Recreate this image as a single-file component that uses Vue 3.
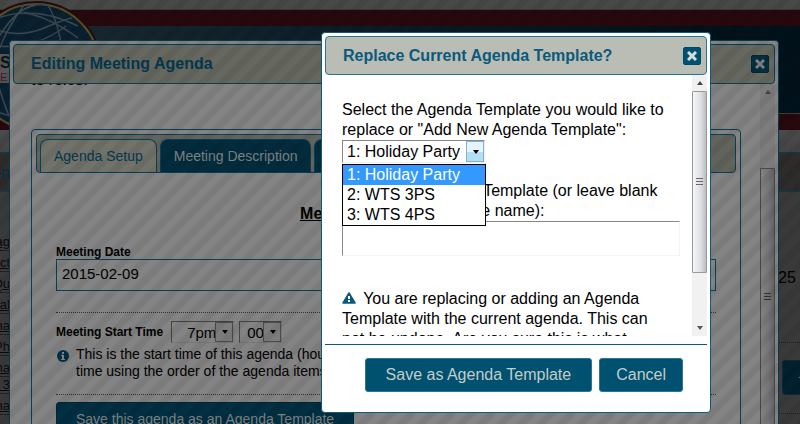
<template>
  <div class="desk">
    <header class="banner">
      <div class="band sky"></div>
      <div class="band red"></div>
      <div class="band navy"></div>
      <div class="band red"></div>
      <svg class="globe" width="104" height="134" viewBox="0 0 104 134" aria-hidden="true">
        <circle cx="36" cy="67" r="65" fill="#08161f" stroke="#260a10" stroke-width="2" />
        <circle cx="36" cy="67" r="63" fill="#09202f" stroke="#5a4e26" stroke-width="2" />
        <g fill="none" stroke="#3c474f" stroke-width="1.5">
          <path d="M0 35Q22 0 48 5Q62 30 62 60" />
          <path d="M-2 18Q35 5 78 26" />
          <path d="M-2 30Q20 38 44 28T72 18" />
          <path d="M24 13Q48 16 78 38" />
          <path d="M-2 46Q34 50 66 26" />
          <path d="M24 5Q6 30 0 48" />
          <path d="M-2 83Q4 106 12 122M-2 112L10 116" />
        </g>
        <rect x="-2" y="54" width="30" height="29" fill="#565656" />
      </svg>
      <div class="brand"><b>S</b><span>E</span></div>
    </header>

    <main class="page">
      <aside class="left">
        <div class="strip">en</div>
        <a v-for="(item, i) in roles" :key="i" href="#" :class="{ tight: item === 't 3' }" @click.prevent>{{ item }}</a>
      </aside>
      <aside class="right">
        <div class="strip"></div>
        <p class="date">25</p>
        <div class="action"><button type="button" aria-label="Add">✦</button></div>
      </aside>
    </main>

    <section class="window editor">
      <div class="titlebar">
        <h2>Editing Meeting Agenda</h2>
        <button type="button" class="close" aria-label="Close">
          <svg width="10" height="10" viewBox="0 0 10 10"><path d="M1 1l8 8M9 1l-8 8" /></svg>
        </button>
      </div>
      <div class="scroller">
        <div class="content">
          <p class="intro">to roles.</p>
          <div class="tabs">
            <nav>
              <a href="#setup" class="active">Agenda Setup</a>
              <a href="#description">Meeting Description</a>
              <a href="#roles">Roles</a>
            </nav>
            <form class="setup" @submit.prevent>
              <h3>Meeting Agenda Setup</h3>
              <label class="caption" for="date">Meeting Date</label>
              <input id="date" v-model="date" type="text">
              <hr>
              <div class="time">
                <label class="caption" for="hour">Meeting Start Time</label>
                <span class="pick hour"><select id="hour"><option>7pm</option></select></span>
                <span class="pick minute"><select aria-label="Minutes"><option>00</option></select></span>
              </div>
              <div class="hint">
                <svg width="12" height="12" viewBox="0 0 12 12" aria-hidden="true">
                  <circle cx="6" cy="6" r="6" fill="#042f42" />
                  <path d="M5 2h2v2H5zM4 5h3v4h1v1H4V9h1V6H4z" fill="#858585" />
                </svg>
                <p>This is the start time of this agenda (hours and<br>time using the order of the agenda items will</p>
              </div>
              <hr class="low">
              <button type="button" class="save">Save this agenda as an Agenda Template</button>
            </form>
          </div>
        </div>
        <div class="bar">
          <i class="up"></i>
          <div class="thumb"><i class="grip"></i></div>
        </div>
      </div>
    </section>

    <div class="overlay"></div>

    <section class="window dialog" role="dialog" aria-labelledby="dialog-title">
      <div class="titlebar">
        <h2 id="dialog-title">Replace Current Agenda Template?</h2>
        <button type="button" class="close" aria-label="Close">
          <svg width="10" height="10" viewBox="0 0 10 10"><path d="M1 1l8 8M9 1l-8 8" /></svg>
        </button>
      </div>
      <div class="scroller">
        <div class="content">
          <label for="template">Select the Agenda Template you would like to<br>replace or "Add New Agenda Template":</label>
          <div class="combo">
            <span class="pick">
              <select id="template" v-model="selected">
                <option v-for="t in templates" :key="t">{{ t }}</option>
              </select>
            </span>
            <ul class="options" role="listbox">
              <li
                v-for="t in templates"
                :key="t"
                role="option"
                :aria-selected="t === selected"
                :class="{ on: t === selected }"
                @click="selected = t"
              >{{ t }}</li>
            </ul>
          </div>
          <label for="name">Name your Agenda Template (or leave blank<br>to keep the Template name):</label>
          <input id="name" v-model="name" type="text">
          <p class="warning">
            <svg width="14" height="12" viewBox="0 0 14 12" aria-hidden="true">
              <path d="M7 1L13 11H1z" fill="#0b5a7c" stroke="#0b5a7c" stroke-width="1.5" stroke-linejoin="round" />
              <path d="M6 4h2v3H6zM6 8h2v2H6z" fill="#fff" />
            </svg>
            You are replacing or adding an Agenda<br>Template with the current agenda. This can<br>not be undone. Are you sure this is what
          </p>
        </div>
        <div class="bar">
          <i class="up"></i>
          <div class="thumb"><i class="grip"></i></div>
          <i class="down"></i>
        </div>
      </div>
      <footer>
        <button type="button" class="primary">Save as Agenda Template</button>
        <button type="button">Cancel</button>
      </footer>
    </section>
  </div>
</template>

<script setup>
import { ref } from 'vue';

const roles = ['ag', 'ct', 'Qu', 'Sal', 'na', 'Ph', 'na', 't 3', 'na'];
const templates = ['1: Holiday Party', '2: WTS 3PS', '3: WTS 4PS'];

const selected = ref(templates[0]);
const date = ref('2015-02-09');
const name = ref('');
</script>

<style>
body {
  background: #3a3a3a;
}
</style>

<style scoped>
* {
  box-sizing: border-box;
}

.desk {
  position: relative;
  min-height: 100vh;
  overflow: hidden;
  font: 16px/20px "Liberation Sans", Arial, sans-serif;
  color: #000;
}

h2, h3, p, ul {
  margin: 0;
  padding: 0;
}

button, input, select {
  font-family: inherit;
  margin: 0;
}

/* Page behind the windows */
.banner {
  position: relative;
}

.band.sky {
  height: 9px;
  background: #484848;
}

.band.red {
  height: 17px;
  background: #26080d;
  border-top: 1px solid #3c3c3c;
}

.band.navy {
  height: 87px;
  background: linear-gradient(90deg, #1c2a32, #0c1e28 40%, #02121b 85%);
}

.globe {
  position: absolute;
  left: 0;
  top: 0;
}

.brand {
  position: absolute;
  left: 0;
  top: 54px;
}

.brand b,
.brand span {
  display: block;
}

.brand b {
  font-size: 16px;
  line-height: 17px;
  color: #08141c;
}

.brand span {
  font-size: 11px;
  line-height: 12px;
  color: #4a1c24;
}

.page {
  display: flex;
  justify-content: space-between;
  padding-top: 22px;
  background: linear-gradient(#4a4a4a, #3a3a3a 60px);
}

.left {
  width: 10px;
}

.left a {
  display: flex;
  justify-content: flex-end;
  height: 21px;
  padding-top: 5px;
  font-size: 13px;
  line-height: 14px;
  color: #0a0a0a;
  white-space: nowrap;
  border-bottom: 1px dashed #1c1c1c;
}

.left a.tight {
  height: 17px;
  padding-top: 1px;
}

.left .strip {
  display: flex;
  justify-content: flex-end;
  margin-bottom: 38px;
}

.strip {
  height: 40px;
  line-height: 40px;
  color: #062c3f;
  background: #2d2c2b;
  border: solid #0c3a4f;
  border-width: 1px 0;
}

.right {
  width: 22px;
}

.right .date {
  height: 151px;
  padding-top: 76px;
  border-bottom: 1px dotted #1d1d1d;
}

.right .action {
  padding: 17px 0 18px 4px;
  border-bottom: 1px dotted #1d1d1d;
}

.right button {
  display: block;
  width: 40px;
  height: 35px;
  color: #777;
  background: #02202e;
  border: 1px solid #0a2c3b;
  border-radius: 3px;
}

/* Windows */
.window {
  position: absolute;
  padding: 3px;
  border: 1px solid #0b5a7c;
  border-radius: 4px;
  background: #fff;
}

.titlebar {
  display: flex;
  align-items: center;
  justify-content: space-between;
  height: 39px;
  padding: 0 5px 0 17px;
  border: 1px solid #2a7591;
  border-radius: 4px;
  background: #b9bdb4;
}

.titlebar h2 {
  font-size: 16px;
  color: #0b5a7c;
}

.close {
  width: 18px;
  height: 18px;
  padding: 0;
  border: 1px solid #004a68;
  border-radius: 2px;
  background: #00506f;
  color: #d6dcda;
}

.close svg {
  display: block;
  margin: 3px;
}

.close path {
  fill: none;
  stroke: currentColor;
  stroke-width: 3;
}

.scroller {
  display: flex;
  overflow: hidden;
}

.content {
  flex: 1;
  min-width: 0;
}

.bar {
  display: flex;
  flex-direction: column;
  align-items: center;
  width: 15px;
  background: #f1f1f1;
}

.bar .up,
.bar .down {
  flex: none;
  width: 0;
  height: 0;
  border: solid transparent;
  border-width: 0 3px;
}

.bar .up {
  margin: 6px 0;
  border-bottom: 4px solid #444;
}

.bar .down {
  margin: 6px 0;
  border-top: 4px solid #555;
}

.thumb {
  display: flex;
  align-items: center;
  justify-content: center;
  width: 15px;
  border: 1px solid #999;
  border-radius: 1px;
  background: linear-gradient(90deg, #f6f6f6, #dedfe2 60%, #bcbdc2);
}

.grip {
  width: 7px;
  height: 8px;
  background: repeating-linear-gradient(#666 0 1px, transparent 1px 3px);
}

.pick {
  position: relative;
  display: inline-block;
}

.pick select {
  display: block;
  width: 100%;
  height: 100%;
  padding: 0 0 0 4px;
  appearance: none;
  color: inherit;
  border: 1px solid;
  border-color: #888 #f0f0f0 #f0f0f0 #888;
  border-radius: 0;
  background: transparent;
  font-size: 16px;
}

.pick::before {
  content: "";
  position: absolute;
  top: 1px;
  right: 1px;
  bottom: 1px;
  width: 16px;
  border: 1px solid #7fb3d0;
  background: linear-gradient(#e4f3fc 50%, #b4def4 50%);
}

.pick::after {
  content: "";
  position: absolute;
  top: 50%;
  right: 6px;
  margin-top: -2px;
  border: solid transparent;
  border-width: 4px 3px 0;
  border-top-color: #000;
}

/* Agenda editor */
.editor {
  top: 40px;
  left: 9px;
  right: 21px;
  bottom: 0;
  border-color: #0a3a4e;
  border-bottom: 0;
  border-radius: 4px 4px 0 0;
  padding-bottom: 0;
  background: #838383;
  overflow: hidden;
}

.editor .titlebar {
  height: 40px;
  border-color: #0a3f55;
  background: #66675f;
}

.editor h2 {
  color: #04384f;
}

.editor .close {
  border-color: #022635;
  background: #022f42;
  color: #808583;
}

.editor .scroller {
  height: 341px;
}

.editor .content {
  padding: 0 19px 0 18px;
}

.intro {
  height: 49px;
  margin-top: -4px;
  line-height: 0;
}

.tabs {
  padding: 4px;
  height: 320px;
  border: 1px solid #0a3f55;
  border-radius: 4px;
}

.tabs nav {
  display: flex;
  gap: 3px;
  height: 39px;
  padding: 4px 3px 0;
  border: 1px solid #0a3f55;
  border-radius: 4px;
  background: #62635b;
  overflow: hidden;
}

.tabs nav a {
  height: 34px;
  padding: 0 13px;
  border: 1px solid #0a3f55;
  border-bottom: 0;
  border-radius: 8px 8px 0 0;
  background: #022c3e;
  color: #7c8280;
  font-size: 14px;
  line-height: 33px;
  text-decoration: none;
  white-space: nowrap;
}

.tabs nav a.active {
  background: #717269;
  color: #04384f;
}

.setup {
  padding: 31px 20px 0;
}

.setup h3 {
  margin-bottom: 21px;
  font-size: 16px;
  text-align: center;
  text-decoration: underline;
}

.caption {
  font-size: 12px;
  font-weight: bold;
  line-height: 14px;
}

.setup > .caption {
  display: block;
}

.setup input {
  display: block;
  width: 100%;
  height: 32px;
  padding: 0 5px 4px;
  border: 1px solid #0a3f55;
  background: transparent;
  font-size: 15px;
}

.setup hr {
  margin: 21px 0 8px;
  border: 0;
  border-top: 1px dotted #333;
}

.setup hr.low {
  margin: 14px 0 7px;
}

.time {
  display: flex;
  align-items: center;
  gap: 5px;
}

.time .caption {
  margin-right: 3px;
}

.time .pick {
  height: 22px;
}

.time .pick select {
  border-color: #444 #777 #777 #444;
  padding: 0 0 0 7px;
  font-size: 15px;
}

.time .hour {
  width: 63px;
}

.time .pick.hour select {
  padding-left: 15px;
}

.time .minute {
  width: 43px;
}

.time .pick::before {
  border-color: #4c4c4c;
  background: #7c7c7c;
}

.hint {
  display: flex;
  gap: 7px;
  padding: 3px 1px 0;
  font-size: 14px;
  line-height: 17px;
  white-space: nowrap;
}

.hint svg {
  margin-top: 4px;
}

.save {
  height: 34px;
  padding: 0 19px;
  border: 1px solid #022635;
  border-radius: 3px;
  background: #022f42;
  color: #7c8280;
  font-size: 14px;
}

.editor .bar {
  background: #7c7c7c;
}

.editor .thumb {
  height: 350px;
  margin-top: 68px;
  border-color: #484848;
  background: linear-gradient(90deg, #828282, #747476 60%, #646466);
}

.editor .grip {
  background: repeating-linear-gradient(#333 0 1px, transparent 1px 3px);
}

/* Modal shade */
.overlay {
  position: absolute;
  inset: 0;
  background: linear-gradient(135deg, rgba(0,0,0,0.06) 23%, transparent 27% 48%, rgba(0,0,0,0.06) 52% 73%, transparent 77% 98%, rgba(0,0,0,0.06));
  background-size: 20px 20px;
}

/* Replace dialog */
.dialog {
  top: 32px;
  left: 321px;
  width: 390px;
}

.dialog .scroller {
  height: 261px;
}

.dialog .content {
  padding: 25px 12px 0 17px;
  white-space: nowrap;
}

.dialog .content label {
  display: block;
}

.combo {
  position: relative;
  margin-bottom: 18px;
}

.combo .pick {
  display: block;
  width: 143px;
  height: 23px;
}

.options {
  position: absolute;
  top: 24px;
  left: 0;
  width: 144px;
  border: 1px solid #000;
  background: #fff;
  list-style: none;
}

.options li {
  padding-left: 4px;
}

.options li.on {
  background: #3399ff;
  color: #fff;
}

.dialog .content input {
  display: block;
  width: 100%;
  height: 35px;
  border: 1px solid;
  border-color: #888 #f4f4f4 #f4f4f4 #888;
  background: #fff;
  font-size: 16px;
}

.warning {
  margin-top: 33px;
}

.warning svg {
  margin-right: 3px;
}

.dialog .thumb {
  height: 182px;
}

.dialog .bar .down {
  margin-top: auto;
}

.dialog footer {
  display: flex;
  justify-content: flex-end;
  gap: 7px;
  margin-top: 8px;
  padding: 13px 24px 17px 0;
  border-top: 1px solid #0b5a7c;
}

.dialog footer button {
  height: 34px;
  padding: 0 16px;
  border: 1px solid #2a7591;
  border-radius: 3px;
  background: #00506f;
  color: #c3ccc9;
  font-size: 16px;
}

.dialog footer .primary {
  padding: 0 20px;
}
</style>
